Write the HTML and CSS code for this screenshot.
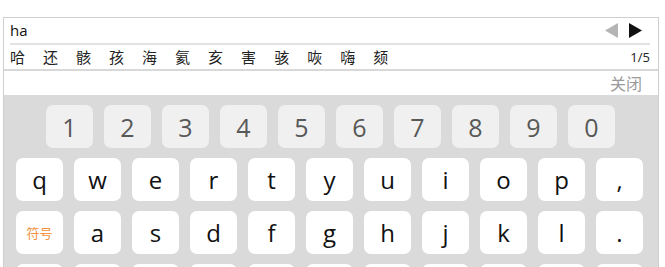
FILE: index.html
```html
<!DOCTYPE html>
<html lang="zh-CN">
<head>
    <meta charset="UTF-8">
    <meta name="viewport" content="width=device-width, initial-scale=1.0">
    <title>输入法键盘</title>
    <link rel="stylesheet" href="styles.css">
</head>
<body>
    <div class="ime">
        <!-- 拼音与候选词 -->
        <div class="top">
            <div class="pinyin-row">
                <span class="pinyin">ha</span>
                <span class="arrows">
                    <svg width="14" height="15" viewBox="0 0 14 15"><polygon points="14,0 14,15 1,7.5" fill="#b4b4b4"/></svg>
                    <svg width="14" height="15" viewBox="0 0 14 15"><polygon points="0,0 0,15 13,7.5" fill="#111"/></svg>
                </span>
            </div>
            <div class="cand-row">
                <span class="cands">
                    <span>哈</span><span>还</span><span>骸</span><span>孩</span><span>海</span><span>氦</span><span>亥</span><span>害</span><span>骇</span><span>咴</span><span>嗨</span><span>颏</span>
                </span>
                <span class="page-num">1/5</span>
            </div>
        </div>
        <div class="close-row"><span class="close">关闭</span></div>

        <!-- 键盘 -->
        <div class="keyboard">
            <div class="row num-row">
                <div class="key num">1</div>
                <div class="key num">2</div>
                <div class="key num">3</div>
                <div class="key num">4</div>
                <div class="key num">5</div>
                <div class="key num">6</div>
                <div class="key num">7</div>
                <div class="key num">8</div>
                <div class="key num">9</div>
                <div class="key num">0</div>
            </div>
            <div class="row">
                <div class="key">q</div>
                <div class="key">w</div>
                <div class="key">e</div>
                <div class="key">r</div>
                <div class="key">t</div>
                <div class="key">y</div>
                <div class="key">u</div>
                <div class="key">i</div>
                <div class="key">o</div>
                <div class="key">p</div>
                <div class="key">,</div>
            </div>
            <div class="row">
                <div class="key symbol">符号</div>
                <div class="key">a</div>
                <div class="key">s</div>
                <div class="key">d</div>
                <div class="key">f</div>
                <div class="key">g</div>
                <div class="key">h</div>
                <div class="key">j</div>
                <div class="key">k</div>
                <div class="key">l</div>
                <div class="key">.</div>
            </div>
            <div class="row">
                <div class="key"></div>
                <div class="key"></div>
                <div class="key"></div>
                <div class="key"></div>
                <div class="key"></div>
                <div class="key"></div>
                <div class="key"></div>
                <div class="key"></div>
                <div class="key"></div>
                <div class="key"></div>
                <div class="key"></div>
            </div>
        </div>
    </div>
</body>
</html>
```

FILE: styles.css
```css
body {
    margin: 0;
    background-color: #fff;
    font-family: "Open Sans", "Noto Sans CJK SC", sans-serif;
    overflow: hidden;
}

.ime {
    margin: 17px 0 0 3px;
    width: 654px;
    border: 1px solid #cfcfcf;
    border-bottom: none;
}

.top {
    margin: 0 8px 0 6px;
}

.pinyin-row {
    display: flex;
    justify-content: space-between;
    align-items: center;
    height: 25px;
    border-bottom: 2px solid #e2e2e2;
}

.pinyin {
    font-size: 15px;
    color: #111;
    line-height: 25px;
}

.arrows {
    display: flex;
    gap: 11px;
    margin-right: 7px;
}

.arrows svg {
    display: block;
}

.cand-row {
    display: flex;
    justify-content: space-between;
    align-items: center;
    height: 24px;
}

.cands span {
    font-family: "Noto Sans CJK SC", sans-serif;
    font-size: 15px;
    color: #222;
    margin-right: 18px;
}

.page-num {
    font-size: 13px;
    color: #222;
}

.close-row {
    border-top: 2px solid #d8d8d8;
    height: 24px;
    display: flex;
    justify-content: flex-end;
    align-items: center;
    padding-right: 16px;
}

.close {
    font-family: "Noto Sans CJK SC", sans-serif;
    font-size: 16px;
    color: #9a9a9a;
}

.keyboard {
    background-color: #dadada;
    padding: 10px 0 0 12px;
    height: 200px;
}

.row {
    display: flex;
    gap: 11px;
    margin-bottom: 10px;
}

.num-row {
    margin-left: 30px;
}

.key {
    width: 47px;
    height: 43px;
    background-color: #fff;
    border-radius: 7px;
    display: flex;
    align-items: center;
    justify-content: center;
    font-size: 24px;
    color: #111;
}

.key.num {
    background-color: #f0f0f0;
    color: #585858;
    font-size: 25px;
}

.key.symbol {
    font-family: "Noto Sans CJK SC", sans-serif;
    font-size: 13px;
    color: #f39140;
}
```
